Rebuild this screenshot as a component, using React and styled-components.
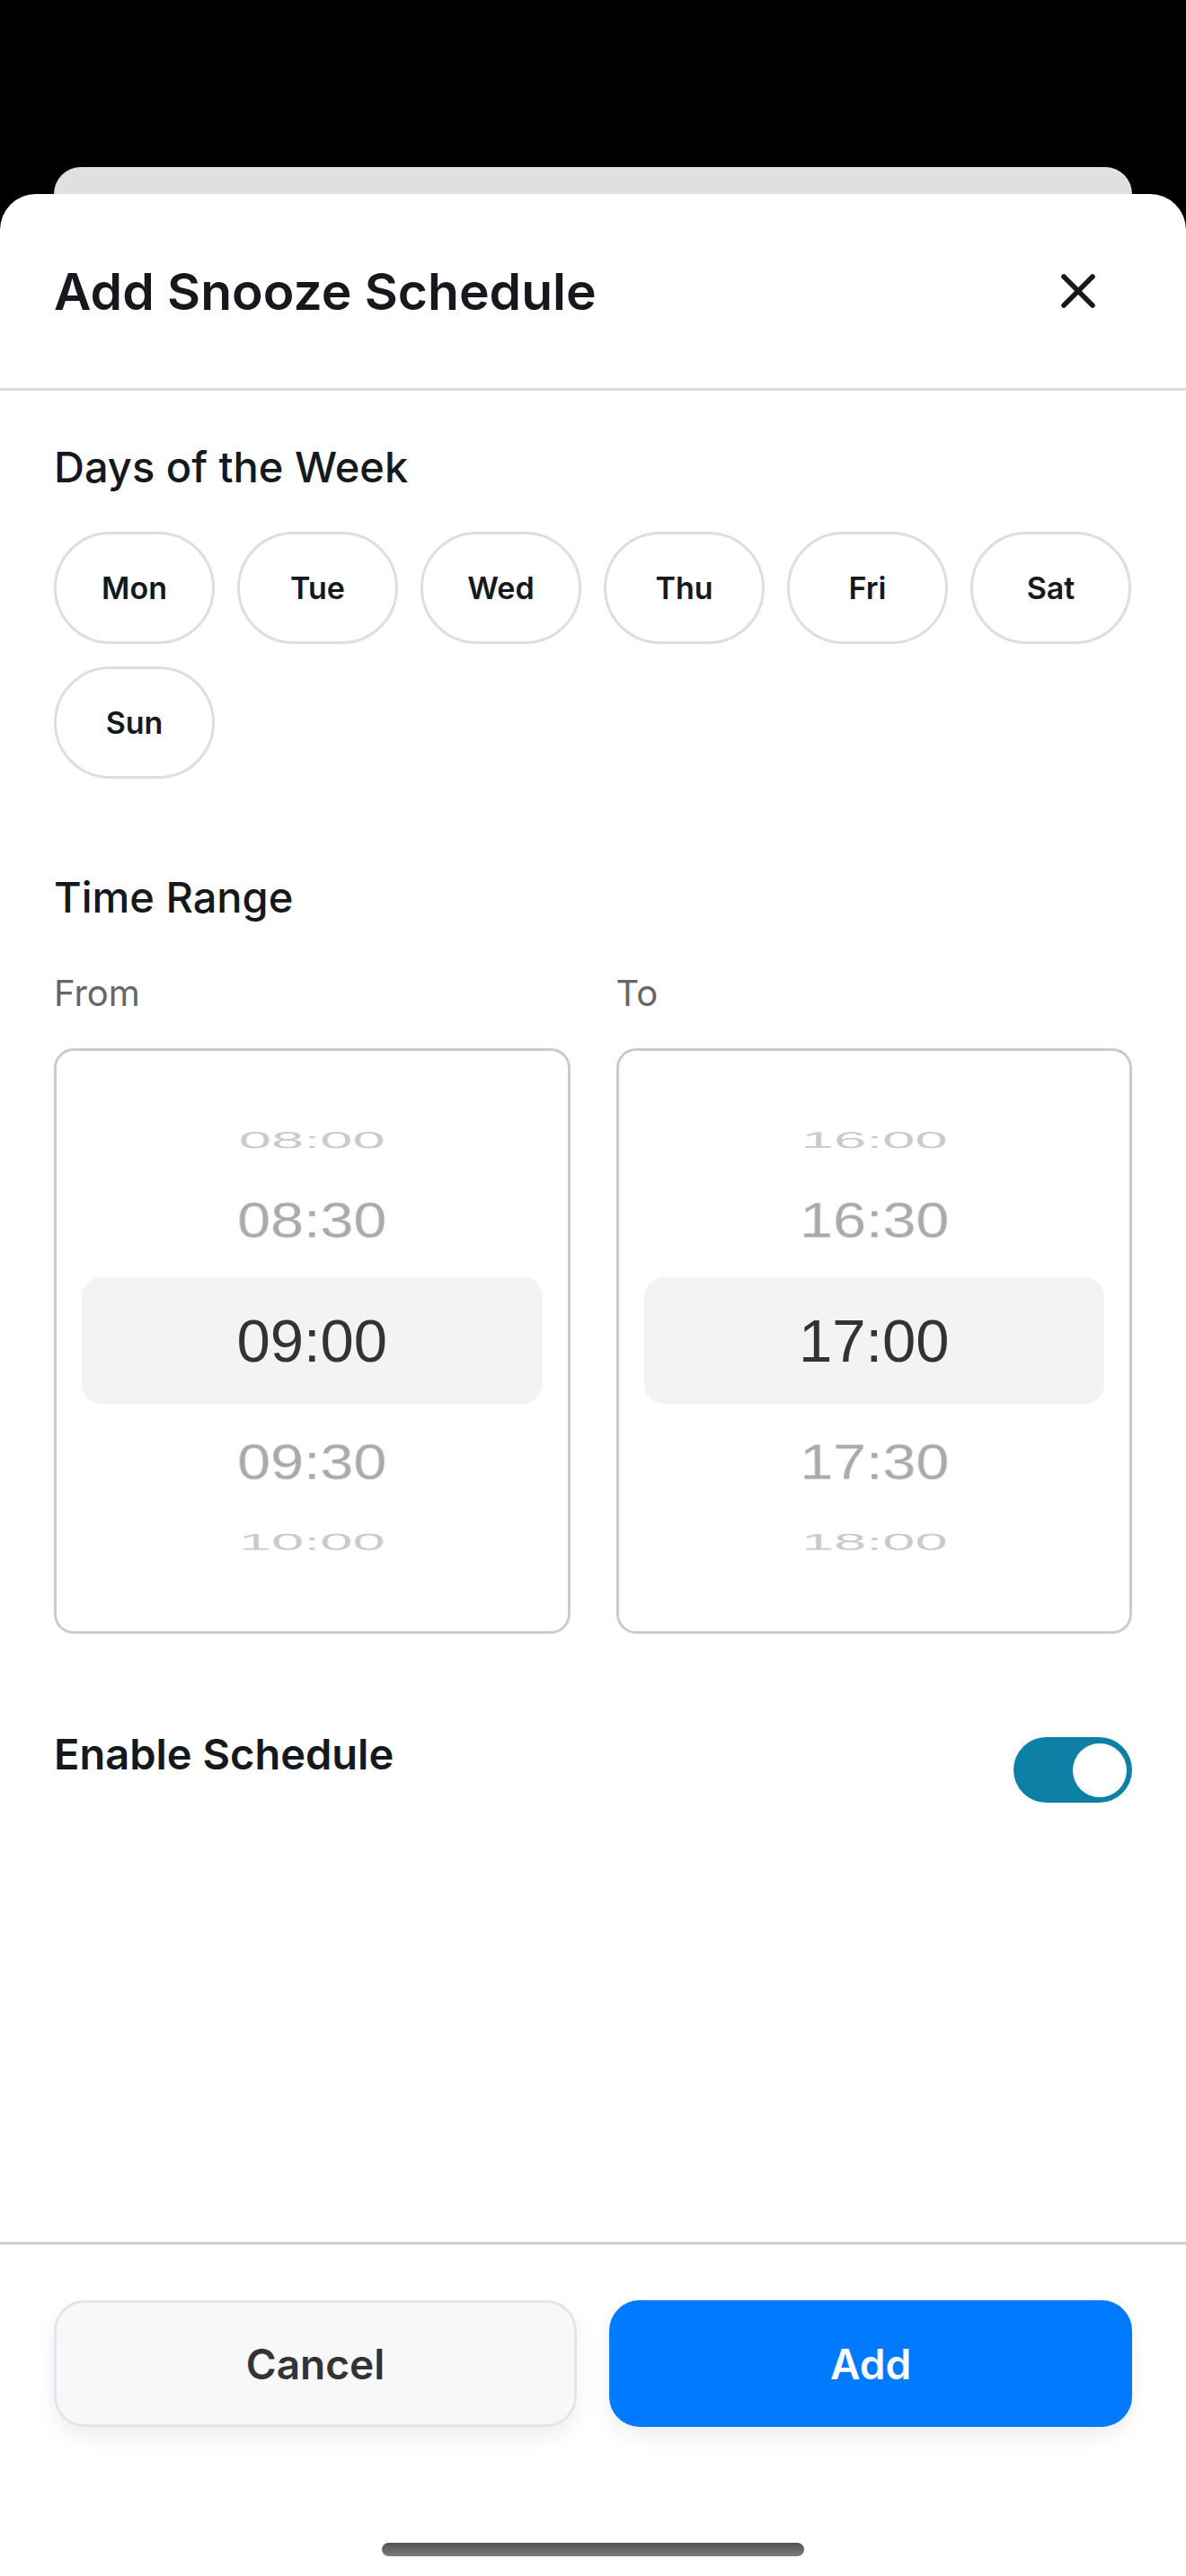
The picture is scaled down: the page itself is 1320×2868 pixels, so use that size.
import React, { useState } from 'react';
import styled, { createGlobalStyle } from 'styled-components';

const GlobalStyle = createGlobalStyle`
    html, body {
        margin: 0;
        padding: 0;
        background: #000;
    }
    * {
        box-sizing: border-box;
    }
`;

const Screen = styled.div`
    width: 1320px;
    min-height: 2868px;
    padding-top: 186px;
    background: #000;
    display: flex;
    flex-direction: column;
    font-family: Inter, "Noto Sans", sans-serif;
    color: #15191e;
`;

const BackCard = styled.div`
    margin: 0 60px;
    height: 30px;
    background: #e0e0e0;
    border-radius: 30px 30px 0 0;
`;

const Sheet = styled.div`
    flex: 1;
    background: #fff;
    border-radius: 40px 40px 0 0;
    display: flex;
    flex-direction: column;
`;

const Header = styled.div`
    height: 219px;
    padding: 0 80px 0 60px;
    display: flex;
    align-items: center;
    justify-content: space-between;
    border-bottom: 3px solid #dcdcdc;
`;

const Title = styled.h1`
    margin: 0;
    font-size: 57px;
    font-weight: 600;
`;

const CloseButton = styled.button`
    width: 80px;
    height: 80px;
    border: none;
    background: none;
    padding: 0;
    display: flex;
    align-items: center;
    justify-content: center;
`;

const Body = styled.div`
    flex: 1;
    padding: 58px 60px 0;
`;

const SectionTitle = styled.h2`
    margin: ${props => props.$top || 0}px 0 0;
    font-size: 47px;
    line-height: 53px;
    font-weight: 500;
`;

const DayGrid = styled.div`
    margin-top: 46px;
    display: flex;
    flex-wrap: wrap;
    gap: 25px;
`;

const DayPill = styled.button`
    width: 179px;
    height: 125px;
    border: 3px solid #dedede;
    border-radius: 63px;
    background: ${props => props.$on ? '#007aff' : '#fff'};
    color: ${props => props.$on ? '#fff' : '#15191e'};
    font-family: inherit;
    font-size: 34px;
    font-weight: 600;
    padding: 0;
`;

const TimeGrid = styled.div`
    margin-top: 57px;
    display: grid;
    grid-template-columns: 1fr 1fr;
    column-gap: 51px;
`;

const TimeColumn = styled.div`
    display: flex;
    flex-direction: column;
`;

const FieldLabel = styled.div`
    font-size: 40px;
    line-height: 48px;
    color: #666;
`;

const Wheel = styled.div`
    position: relative;
    margin-top: 37px;
    height: 652px;
    border: 3px solid #cbcbcb;
    border-radius: 22px;
    overflow: hidden;
    perspective: 5000px;
    background: #fff;
`;

const Highlight = styled.div`
    position: absolute;
    left: 28px;
    right: 28px;
    top: 50%;
    height: 141px;
    margin-top: -71px;
    background: #f3f3f3;
    border-radius: 22px;
`;

const WheelItem = styled.div`
    position: absolute;
    left: 0;
    right: 0;
    top: 50%;
    height: 136px;
    margin-top: -68px;
    line-height: 136px;
    text-align: center;
    font-family: "Liberation Sans", Arial, sans-serif;
    font-size: 67px;
    color: ${props => ['#333', '#aaa', '#cacaca', '#dedede'][props.$dist]};
    backface-visibility: hidden;
`;

const ToggleRow = styled.div`
    margin-top: 107px;
    display: flex;
    justify-content: space-between;
    align-items: flex-start;
`;

const RowLabel = styled.div`
    font-size: 47px;
    line-height: 53px;
    font-weight: 600;
`;

const Switch = styled.button`
    margin-top: 8px;
    width: 132px;
    height: 73px;
    border: none;
    border-radius: 37px;
    padding: 0 6px;
    background: ${props => props.$on ? '#0e7fa5' : '#d6d6d6'};
    display: flex;
    align-items: center;
    justify-content: ${props => props.$on ? 'flex-end' : 'flex-start'};
`;

const Knob = styled.span`
    width: 60px;
    height: 60px;
    border-radius: 50%;
    background: #fff;
`;

const Footer = styled.div`
    border-top: 3px solid #cfcfcf;
    padding: 62px 60px 0;
    display: flex;
    gap: 36px;
`;

const ActionButton = styled.button`
    flex: 1;
    height: 141px;
    border-radius: 34px;
    font-family: inherit;
    font-size: 46px;
    font-weight: 600;
    border: 3px solid ${props => props.$primary ? '#007aff' : '#e3e5e9'};
    background: ${props => props.$primary ? '#007aff' : '#f7f8fa'};
    color: ${props => props.$primary ? '#fff' : '#333'};
    box-shadow: 0 10px 24px rgba(0, 0, 0, 0.07);
`;

const HomeBar = styled.div`
    width: 470px;
    height: 15px;
    margin: 129px auto 22px;
    border-radius: 8px;
    background: linear-gradient(#525252, #7c7c7c);
`;

const days = ['Mon', 'Tue', 'Wed', 'Thu', 'Fri', 'Sat', 'Sun'];

const slots = [];
for (let h = 0; h < 24; h++) {
    slots.push(`${String(h).padStart(2, '0')}:00`);
    slots.push(`${String(h).padStart(2, '0')}:30`);
}

// drum geometry of the wheel picker
const STEP = 32;
const RADIUS = 256;

const TimeWheel = ({ value }) => {
    const idx = slots.indexOf(value);
    const shown = [];
    for (let off = -3; off <= 3; off++) {
        const i = idx + off;
        if (i < 0 || i >= slots.length) continue;
        shown.push({ off, label: slots[i] });
    }
    return (
        <Wheel>
            <Highlight />
            {shown.map(s => (
                <WheelItem
                    key={s.label}
                    $dist={Math.abs(s.off)}
                    style={{ transform: `translateZ(-${RADIUS}px) rotateX(${-s.off * STEP}deg) translateZ(${RADIUS}px)` }}
                >
                    {s.label}
                </WheelItem>
            ))}
        </Wheel>
    );
};

const App = () => {
    const [picked, setPicked] = useState([]);
    const [enabled, setEnabled] = useState(true);

    const toggleDay = d => {
        setPicked(picked.includes(d) ? picked.filter(x => x !== d) : [...picked, d]);
    };

    return (
        <>
            <GlobalStyle />
            <Screen>
                <BackCard />
                <Sheet>
                    <Header>
                        <Title>Add Snooze Schedule</Title>
                        <CloseButton aria-label="Close">
                            <svg width="40" height="40" viewBox="0 0 40 40">
                                <path d="M4 4 L36 36 M36 4 L4 36" stroke="#15191c" strokeWidth="5.5" strokeLinecap="round" fill="none" />
                            </svg>
                        </CloseButton>
                    </Header>

                    <Body>
                        <SectionTitle>Days of the Week</SectionTitle>
                        <DayGrid>
                            {days.map(d => (
                                <DayPill key={d} $on={picked.includes(d)} onClick={() => toggleDay(d)}>{d}</DayPill>
                            ))}
                        </DayGrid>

                        <SectionTitle $top={105}>Time Range</SectionTitle>
                        <TimeGrid>
                            <TimeColumn>
                                <FieldLabel>From</FieldLabel>
                                <TimeWheel value="09:00" />
                            </TimeColumn>
                            <TimeColumn>
                                <FieldLabel>To</FieldLabel>
                                <TimeWheel value="17:00" />
                            </TimeColumn>
                        </TimeGrid>

                        <ToggleRow>
                            <RowLabel>Enable Schedule</RowLabel>
                            <Switch $on={enabled} onClick={() => setEnabled(!enabled)} aria-label="Enable Schedule">
                                <Knob />
                            </Switch>
                        </ToggleRow>
                    </Body>

                    <Footer>
                        <ActionButton>Cancel</ActionButton>
                        <ActionButton $primary>Add</ActionButton>
                    </Footer>
                    <HomeBar />
                </Sheet>
            </Screen>
        </>
    );
};

export default App;
